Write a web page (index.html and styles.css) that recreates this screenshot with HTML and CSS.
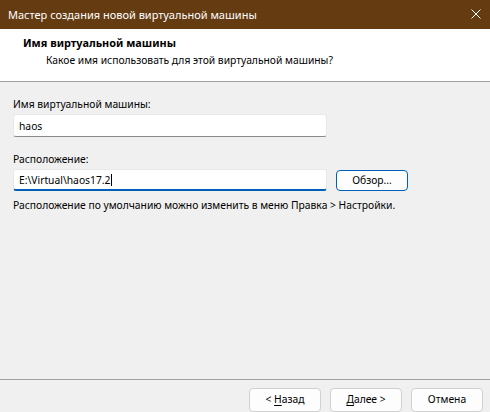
FILE: index.html
```html
<!DOCTYPE html>
<html lang="ru">
<head>
<meta charset="utf-8">
<title>Мастер создания новой виртуальной машины</title>
<link rel="stylesheet" href="styles.css">
</head>
<body>
<div class="window">
  <div class="titlebar">
    <span class="title">Мастер создания новой виртуальной машины</span>
    <svg class="close" width="10" height="10" viewBox="0 0 10 10"><path d="M0.5 0.5L9.5 9.5M9.5 0.5L0.5 9.5" stroke="#fff" stroke-width="1" fill="none"/></svg>
  </div>
  <div class="header">
    <div class="h-title">Имя виртуальной машины</div>
    <div class="h-sub">Какое имя использовать для этой виртуальной машины?</div>
  </div>
  <div class="content">
    <div class="label">Имя виртуальной машины:</div>
    <div class="field">haos</div>
    <div class="label label-loc">Расположение:</div>
    <div class="row">
      <div class="field focused">E:\Virtual\haos17.2<span class="caret"></span></div>
      <button class="btn btn-default">Обзор...</button>
    </div>
    <div class="hint">Расположение по умолчанию можно изменить в меню Правка &gt; Настройки.</div>
  </div>
  <div class="footer">
    <button class="btn">&lt; <u>Н</u>азад</button>
    <button class="btn"><u>Д</u>алее &gt;</button>
    <button class="btn">Отмена</button>
  </div>
</div>
</body>
</html>
```

FILE: styles.css
```css
* { box-sizing: border-box; }
html, body { margin: 0; padding: 0; }
body {
  width: 490px;
  height: 412px;
  overflow: hidden;
  font-family: "Noto Sans", "Open Sans", sans-serif;
  font-size: 10.3px;
  color: #000;
  background: #f0f0f0;
}
.window {
  display: flex;
  flex-direction: column;
  height: 412px;
}

/* caption bar */
.titlebar {
  height: 29px;
  background: #653b12;
  display: flex;
  align-items: center;
  justify-content: space-between;
  padding: 1px 9px 0 8px;
  color: #fff;
  flex-shrink: 0;
}
.title { font-size: 11px; line-height: 16px; }
.close { display: block; margin-top: -2px; }

/* white page header */
.header {
  height: 53px;
  background: #fff;
  border-bottom: 1px solid #a0a0a0;
  padding: 6px 0 0 23px;
  flex-shrink: 0;
}
.h-title { font-weight: bold; font-size: 10.9px; line-height: 16px; }
.h-sub { padding-left: 23px; line-height: 16px; margin-top: 1px; }

/* form body */
.content {
  flex: 1;
  padding: 14px 0 0 13px;
  display: flex;
  flex-direction: column;
  align-items: flex-start;
}
.label { line-height: 16px; }
.label-loc { margin-top: 14px; }
.field {
  width: 314px;
  height: 23px;
  margin-top: 2px;
  background: #fff;
  border-radius: 3px;
  border: 1px solid #e8e8e8;
  border-bottom: 1px solid #8a8a8a;
  padding: 0 0 0 5px;
  display: flex;
  align-items: center;
}
.field.focused {
  height: 22px;
  border-bottom: 2px solid #005fb8;
  margin-top: 0;
  padding-top: 1px;
}
.caret {
  display: inline-block;
  width: 1px;
  height: 12px;
  background: #000;
  margin-left: 1px;
}
.row {
  display: flex;
  align-items: flex-start;
  gap: 9px;
  margin-top: 2px;
}
.row .btn { margin-top: 1px; height: 21px; }
.hint { margin-top: 6px; line-height: 16px; }

/* wizard buttons */
.footer {
  height: 33px;
  border-top: 1px solid #a0a0a0;
  display: flex;
  justify-content: flex-end;
  align-items: flex-start;
  gap: 9px;
  padding: 8px 7px 0 0;
  flex-shrink: 0;
}
.btn {
  font: inherit;
  color: #000;
  width: 72px;
  height: 24px;
  background: #fdfdfd;
  border: 1px solid #d0d0d0;
  border-radius: 4px;
  padding: 0 0 1px;
  margin: 0;
}
.footer .btn { padding-bottom: 3px; }
.btn u { text-underline-offset: 2px; }
.btn-default { border-color: #005fb8; }
```
